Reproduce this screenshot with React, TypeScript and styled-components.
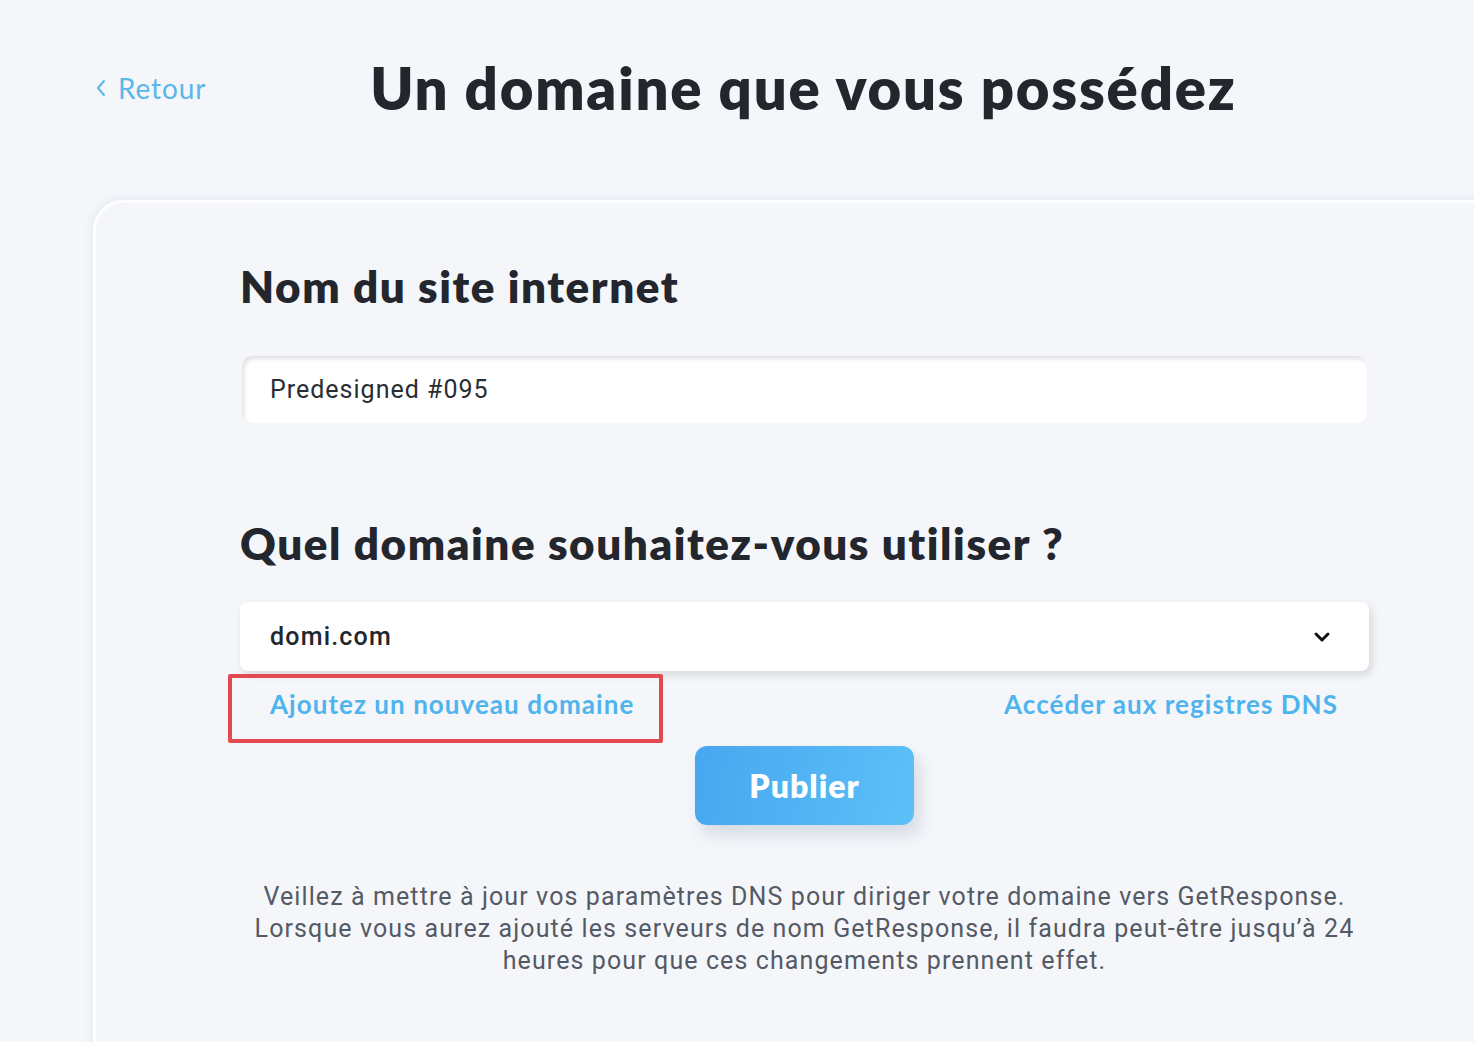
import React from "react";
import styled, { createGlobalStyle } from "styled-components";

const Global = createGlobalStyle`
  html, body {
    margin: 0;
    padding: 0;
    background: #f4f6fa;
    overflow: hidden;
  }
  * { box-sizing: border-box; }
`;

const HEAD = `"Lato", "Open Sans", sans-serif`;
const BODY = `"Roboto", "Liberation Sans", sans-serif`;

const Page = styled.div`
  width: 1474px;
  height: 1042px;
  padding-left: 93px;
  background: #f4f6fa;
`;

const Header = styled.header`
  display: grid;
  grid-template-columns: 148px 1125px;
  align-items: center;
  height: 200px;
  padding-bottom: 26px;
`;

const BackLink = styled.a`
  display: flex;
  align-items: center;
  gap: 11px;
  padding: 2px 0 0 2px;
  font-family: ${HEAD};
  font-size: 28px;
  letter-spacing: 0.9px;
  color: #5ab7ea;
  text-decoration: none;
  white-space: nowrap;
`;

const Title = styled.h1`
  margin: 0;
  text-align: center;
  font-family: ${HEAD};
  font-weight: 800;
  font-size: 58px;
  letter-spacing: 1.8px;
  color: #23262d;
`;

const Card = styled.section`
  width: 1460px;
  height: 900px;
  padding: 55px 0 0 146px;
  border-radius: 30px 0 0 0;
  border-top: 3px solid rgba(255, 255, 255, 0.9);
  border-left: 3px solid rgba(255, 255, 255, 0.9);
  box-shadow: -2px -2px 6px rgba(225, 230, 238, 0.7);
  background: #f4f6fa;
`;

const Content = styled.div`
  width: 1125px;
  display: flex;
  flex-direction: column;
`;

const SectionTitle = styled.h2<{ $top?: number }>`
  margin: ${(p) => p.$top ?? 0}px 0 0 -2px;
  font-family: ${HEAD};
  font-weight: 800;
  font-size: 44px;
  letter-spacing: 1.55px;
  line-height: 56px;
  color: #23262d;
`;

const TextInput = styled.div`
  margin-top: 42px;
  height: 67px;
  display: flex;
  align-items: center;
  padding-left: 28px;
  background: #ffffff;
  border-radius: 10px;
  box-shadow: inset 2px 3px 4px rgba(0, 0, 0, 0.12);
  font-family: ${BODY};
  font-size: 25px;
  letter-spacing: 1px;
  color: #2a2d33;
`;

const Select = styled.div`
  margin: 31px -2px 0 -2px;
  height: 69px;
  display: flex;
  align-items: center;
  justify-content: space-between;
  padding: 0 38px 0 30px;
  background: #ffffff;
  border-radius: 8px;
  box-shadow: 3px 4px 8px rgba(0, 0, 0, 0.12);
  font-family: ${BODY};
  font-weight: 500;
  font-size: 25px;
  letter-spacing: 1.2px;
  color: #23262d;
`;

const LinkRow = styled.div`
  display: flex;
  justify-content: space-between;
  align-items: center;
  margin-top: 3px;
  padding-right: 29px;
`;

const HighlightBox = styled.div`
  margin-left: -14px;
  width: 435px;
  height: 69px;
  display: flex;
  align-items: center;
  padding-left: 38px;
  border: 4px solid #e24a4f;
  border-radius: 2px;
`;

const TextLink = styled.a`
  margin-bottom: 9px;
  font-family: ${HEAD};
  font-weight: 700;
  font-size: 26px;
  letter-spacing: 1.05px;
  color: #4fb4ee;
  text-decoration: none;
  white-space: nowrap;
`;

const ButtonRow = styled.div`
  display: flex;
  justify-content: center;
  margin-top: 3px;
`;

const PublishButton = styled.button`
  width: 219px;
  height: 79px;
  border: none;
  border-radius: 12px;
  background: linear-gradient(100deg, #47a7ef 0%, #5cc0f8 100%);
  box-shadow: 6px 10px 16px rgba(80, 100, 130, 0.18);
  font-family: ${HEAD};
  font-weight: 800;
  font-size: 32px;
  letter-spacing: 1px;
  color: #ffffff;
`;

const Note = styled.p`
  margin: 56px 0 0 0;
  text-align: center;
  font-family: ${BODY};
  font-size: 25px;
  line-height: 32px;
  letter-spacing: 1.1px;
  color: #545a65;
`;

const BackChevron = () => (
  <svg width="12" height="20" viewBox="0 0 12 20" fill="none">
    <polyline points="9,3 3,10 9,17" stroke="#5ab7ea" strokeWidth="2" strokeLinecap="round" strokeLinejoin="round" />
  </svg>
);

const DownChevron = () => (
  <svg width="18" height="12" viewBox="0 0 18 12" fill="none">
    <polyline points="3,3 9,9 15,3" stroke="#111" strokeWidth="3" strokeLinecap="round" strokeLinejoin="round" />
  </svg>
);

export default function App() {
  return (
    <Page>
      <Global />
      <Header>
        <BackLink href="#">
          <BackChevron />
          Retour
        </BackLink>
        <Title>Un domaine que vous possédez</Title>
      </Header>
      <Card>
        <Content>
          <SectionTitle>Nom du site internet</SectionTitle>
          <TextInput>Predesigned #095</TextInput>
          <SectionTitle $top={92}>Quel domaine souhaitez-vous utiliser ?</SectionTitle>
          <Select>
            domi.com
            <DownChevron />
          </Select>
          <LinkRow>
            <HighlightBox>
              <TextLink href="#">Ajoutez un nouveau domaine</TextLink>
            </HighlightBox>
            <TextLink href="#">Accéder aux registres DNS</TextLink>
          </LinkRow>
          <ButtonRow>
            <PublishButton>Publier</PublishButton>
          </ButtonRow>
          <Note>
            Veillez à mettre à jour vos paramètres DNS pour diriger votre domaine vers GetResponse.
            <br />
            Lorsque vous aurez ajouté les serveurs de nom GetResponse, il faudra peut-être jusqu’à 24
            <br />
            heures pour que ces changements prennent effet.
          </Note>
        </Content>
      </Card>
    </Page>
  );
}
